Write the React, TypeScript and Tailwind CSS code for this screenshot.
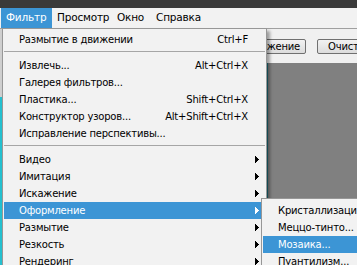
import React from 'react';

const blue = 'bg-[#3c95d5]';

type Item = { label: string; shortcut?: string; sub?: boolean; active?: boolean };

const group1: Item[] = [{ label: 'Размытие в движении', shortcut: 'Ctrl+F' }];
const group2: Item[] = [
  { label: 'Извлечь...', shortcut: 'Alt+Ctrl+X' },
  { label: 'Галерея фильтров...' },
  { label: 'Пластика...', shortcut: 'Shift+Ctrl+X' },
  { label: 'Конструктор узоров...', shortcut: 'Alt+Shift+Ctrl+X' },
  { label: 'Исправление перспективы...' },
];
const group3: Item[] = [
  { label: 'Видео', sub: true },
  { label: 'Имитация', sub: true },
  { label: 'Искажение', sub: true },
  { label: 'Оформление', sub: true, active: true },
  { label: 'Размытие', sub: true },
  { label: 'Резкость', sub: true },
  { label: 'Рендеринг', sub: true },
];

const subItems = ['Кристаллизация...', 'Меццо-тинто...', 'Мозаика...', 'Пуантилизм...'];

function Arrow({ white }: { white?: boolean }) {
  return (
    <svg width="4" height="7" viewBox="0 0 4 7" shapeRendering="crispEdges">
      <path d="M0 0L4 3.5L0 7z" fill={white ? '#fff' : '#000'} />
    </svg>
  );
}

function Row({ item }: { item: Item }) {
  return (
    <div className={`flex h-[17px] items-center ${item.active ? `${blue} text-white` : 'text-black'}`}>
      <span className="flex-1 whitespace-nowrap pl-[15px]">{item.label}</span>
      {item.shortcut && <span className="whitespace-nowrap">{item.shortcut}</span>}
      <span className="flex w-[17px] items-center pl-[7px]">{item.sub && <Arrow white={item.active} />}</span>
    </div>
  );
}

function Separator() {
  return (
    <div className="h-[9px] pt-[3px]">
      <div className="h-px bg-[#a6a6a6]" />
    </div>
  );
}

export default function App() {
  return (
    <div className="relative h-[265px] w-[357px] overflow-hidden bg-[#f0f0f0] font-['DejaVu_Sans',Verdana,sans-serif] text-[10px] tracking-[-0.2px] text-black">
      {/* window title strip */}
      <div className="h-2 bg-[#3a3a3a]" />

      {/* menu bar */}
      <div className="flex h-[21px] border-b border-[#a0a0a0] bg-[#f2f2f2] text-[10.5px]">
        <div className={`ml-[1px] flex w-[51px] shrink-0 items-center pl-[5px] text-white ${blue}`}>Фильтр</div>
        <div className="flex w-[60px] shrink-0 items-center pl-[5px]">Просмотр</div>
        <div className="flex w-[41px] shrink-0 items-center pl-[5px]">Окно</div>
        <div className="flex shrink-0 items-center pl-[3px]">Справка</div>
      </div>

      {/* workspace behind the menu */}
      <div className="flex h-[236px]">
        <div className="flex w-[2px] flex-col">
          <div className="h-[68px] bg-[#cfcfcf]" />
          <div className="flex-1 bg-[#25c0cf]" />
        </div>
        <div className="flex flex-1 flex-col">
          <div className="flex h-[34px] items-center justify-end gap-[11px] pt-[1px]">
            <div className="flex h-[15px] w-[70px] items-center justify-end overflow-hidden rounded-[2px] border border-[#707070] bg-gradient-to-b from-[#f2f2f2] to-[#dcdcdc] pr-[5px]">
              Движение
            </div>
            <div className="-mr-[10px] flex h-[15px] w-[50px] items-center rounded-[2px] border border-[#707070] bg-gradient-to-b from-[#f2f2f2] to-[#dcdcdc] pl-[10px]">
              Очист
            </div>
          </div>
          <div className="ml-[264px] flex-1 border-l-2 border-[#1d6f7d] bg-[#808080]" />
        </div>
      </div>

      {/* Filter dropdown */}
      <div className="absolute left-[2px] top-[28px] h-[260px] w-[265px] border border-[#979797] bg-[#f2f2f2] px-px pt-[2px] shadow-[3px_3px_3px_rgba(0,0,0,0.35)]">
        {group1.map((it) => (
          <Row key={it.label} item={it} />
        ))}
        <Separator />
        {group2.map((it) => (
          <Row key={it.label} item={it} />
        ))}
        <Separator />
        {group3.map((it) => (
          <Row key={it.label} item={it} />
        ))}
      </div>

      {/* Оформление submenu */}
      <div className="absolute left-[261px] top-[198px] h-[90px] w-[120px] border border-[#979797] bg-[#f2f2f2] px-px pt-[3px] shadow-[3px_3px_3px_rgba(0,0,0,0.35)]">
        {subItems.map((s, i) => (
          <div key={s} className={`flex h-[17px] items-center whitespace-nowrap pl-[15px] ${i === 2 ? `${blue} text-white` : ''}`}>
            {s}
          </div>
        ))}
      </div>
    </div>
  );
}
